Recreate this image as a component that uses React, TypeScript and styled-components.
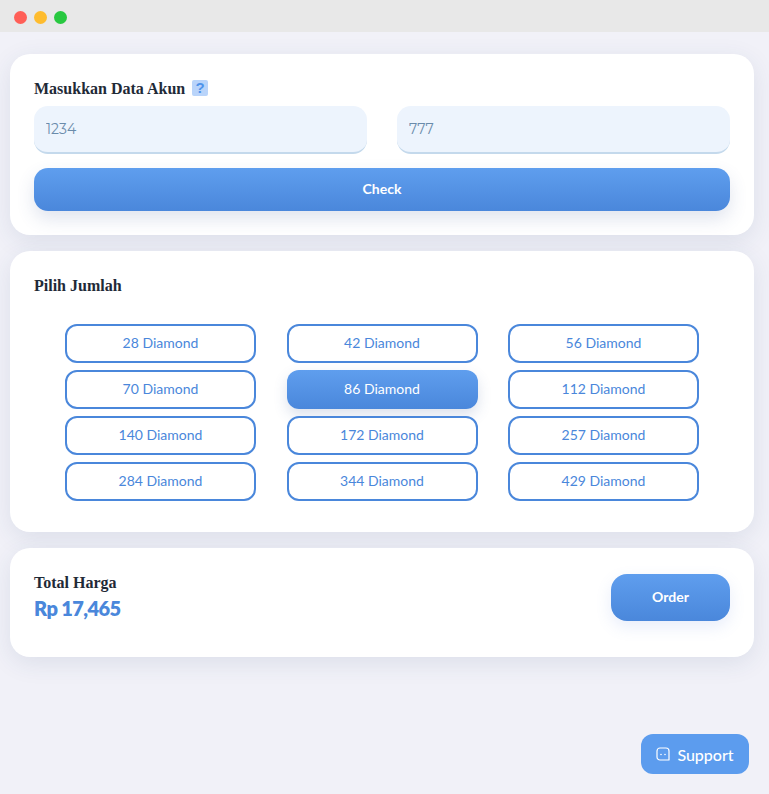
import styled, { createGlobalStyle, css } from 'styled-components'

const bodyFont = `Lato, 'Noto Sans', sans-serif`
const titleFont = `'Liberation Serif', serif`
const blueGradient = 'linear-gradient(180deg, #5f9eee 0%, #4a87db 100%)'

const GlobalStyle = createGlobalStyle`
  html, body {
    margin: 0;
    padding: 0;
    height: 100%;
    background: #f1f1f8;
    overflow: hidden;
  }
  * {
    box-sizing: border-box;
  }
`

const Window = styled.div`
  min-height: 794px;
  background: #f1f1f8;
  font-family: ${bodyFont};
`

const TitleBar = styled.header`
  display: flex;
  align-items: center;
  gap: 7px;
  height: 32px;
  padding: 2px 0 0 14px;
  background: #e8e8e8;
`

const Dot = styled.span<{ $color: string }>`
  width: 13px;
  height: 13px;
  border-radius: 50%;
  background: ${({ $color }) => $color};
`

const Main = styled.main`
  display: flex;
  flex-direction: column;
  gap: 16px;
  padding: 22px 15px 0 10px;
`

const Card = styled.section`
  background: #fff;
  border-radius: 20px;
  padding: 24px;
  box-shadow: 0 6px 24px rgba(40, 70, 110, 0.1);
`

const Title = styled.h2`
  display: flex;
  align-items: center;
  gap: 7px;
  margin: 0;
  height: 20px;
  padding-top: 2px;
  font-family: ${titleFont};
  font-size: 16px;
  font-weight: 700;
  color: #1f2a37;
`

const HelpIcon = styled.span`
  display: flex;
  align-items: center;
  justify-content: center;
  width: 16px;
  height: 16px;
  margin-top: -3px;
  border-radius: 2px;
  background: #b9d4fa;
  color: #4f93ea;
  font-family: 'Liberation Sans', sans-serif;
  font-size: 15px;
  font-weight: 700;
`

const InputRow = styled.div`
  display: grid;
  grid-template-columns: 333px 333px;
  justify-content: space-between;
  margin-top: 8px;
`

const Input = styled.input`
  height: 48px;
  width: 100%;
  padding: 0 12px;
  border: 0;
  border-bottom: 2px solid #c4d9ec;
  border-radius: 14px;
  background: #edf4fd;
  font-family: 'Montserrat', ${bodyFont};
  font-size: 14px;
  color: #6a8bab;
  outline: none;

  &::placeholder {
    color: #6a8bab;
    opacity: 1;
  }
`

const CheckButton = styled.button`
  display: block;
  width: 100%;
  height: 43px;
  margin-top: 14px;
  padding-bottom: 3px;
  border: 0;
  border-radius: 14px;
  background: ${blueGradient};
  color: #fff;
  font-family: ${bodyFont};
  font-size: 14px;
  font-weight: 700;
  box-shadow: 0 8px 18px rgba(60, 90, 150, 0.16);
`

const AmountGrid = styled.div`
  display: grid;
  grid-template-columns: repeat(3, 191px);
  justify-content: space-between;
  row-gap: 7px;
  width: 634px;
  margin: 29px auto 7px;
`

const activeChip = css`
  border-color: transparent;
  background: ${blueGradient};
  background-origin: border-box;
  color: #fff;
  box-shadow: 0 6px 14px rgba(60, 90, 150, 0.18);
`

const Chip = styled.button<{ $active?: boolean }>`
  height: 39px;
  padding-bottom: 3px;
  border: 2px solid #4a87db;
  border-radius: 12px;
  background: #fff;
  color: #4a87db;
  font-family: ${bodyFont};
  font-size: 14px;
  ${({ $active }) => $active && activeChip}
`

const TotalCard = styled(Card)`
  display: flex;
  align-items: flex-start;
  justify-content: space-between;
  height: 109px;
  padding-top: 26px;
`

const TotalLabel = styled.div`
  font-family: ${titleFont};
  font-size: 16px;
  font-weight: 700;
  line-height: 18px;
  color: #1f2a37;
`

const TotalValue = styled.div`
  margin-top: 4px;
  font-size: 20px;
  font-weight: 800;
  letter-spacing: -0.6px;
  line-height: 24px;
  color: #4a87db;
`

const OrderButton = styled.button`
  width: 119px;
  height: 47px;
  padding-bottom: 3px;
  border: 0;
  border-radius: 16px;
  background: ${blueGradient};
  color: #fff;
  font-family: ${bodyFont};
  font-size: 14px;
  font-weight: 700;
  box-shadow: 0 6px 16px rgba(90, 130, 220, 0.14);
`

const SupportButton = styled.button`
  position: fixed;
  right: 20px;
  bottom: 20px;
  display: flex;
  align-items: center;
  justify-content: center;
  gap: 7px;
  width: 108px;
  height: 40px;
  border: 0;
  border-radius: 12px;
  background: #5c9cee;
  color: #fff;
  font-family: ${bodyFont};
  font-size: 16px;
  font-weight: 500;
`

const amounts = [28, 42, 56, 70, 86, 112, 140, 172, 257, 284, 344, 429]

const SupportIcon = () => (
  <svg width="14" height="14" viewBox="0 0 14 14" fill="none">
    <path
      d="M4 1h6a3 3 0 0 1 3 3v9H4a3 3 0 0 1-3-3V4a3 3 0 0 1 3-3z"
      stroke="#fff"
      strokeWidth="1.2"
      strokeLinejoin="round"
    />
    <circle cx="5" cy="7.5" r=".8" fill="#fff" />
    <circle cx="9" cy="7.5" r=".8" fill="#fff" />
  </svg>
)

export default function App() {
  return (
    <Window>
      <GlobalStyle />
      <TitleBar>
        <Dot $color="#ff5f57" />
        <Dot $color="#febc2e" />
        <Dot $color="#28c840" />
      </TitleBar>
      <Main>
        <Card>
          <Title>
            Masukkan Data Akun <HelpIcon>?</HelpIcon>
          </Title>
          <InputRow>
            <Input placeholder="1234" />
            <Input placeholder="777" />
          </InputRow>
          <CheckButton>Check</CheckButton>
        </Card>
        <Card>
          <Title>Pilih Jumlah</Title>
          <AmountGrid>
            {amounts.map((amount) => (
              <Chip key={amount} $active={amount === 86}>
                {amount} Diamond
              </Chip>
            ))}
          </AmountGrid>
        </Card>
        <TotalCard>
          <div>
            <TotalLabel>Total Harga</TotalLabel>
            <TotalValue>Rp 17,465</TotalValue>
          </div>
          <OrderButton>Order</OrderButton>
        </TotalCard>
      </Main>
      <SupportButton>
        <SupportIcon />
        Support
      </SupportButton>
    </Window>
  )
}
